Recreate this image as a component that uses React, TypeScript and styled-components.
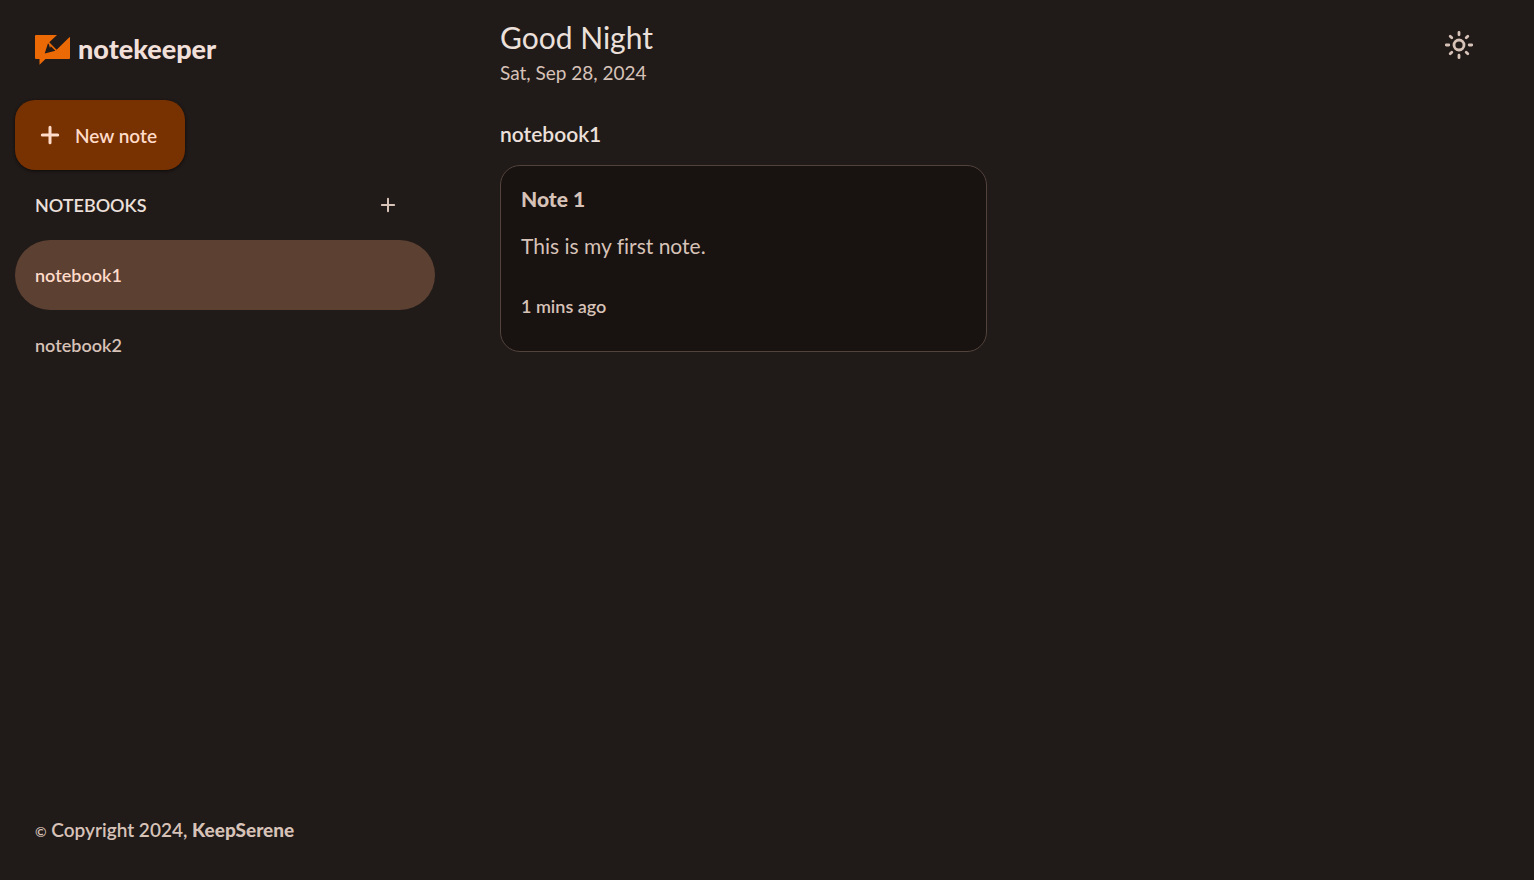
import React from "react";
import styled, { createGlobalStyle } from "styled-components";

const GlobalStyle = createGlobalStyle`
  *, *::before, *::after { box-sizing: border-box; }
  body {
    margin: 0;
    background: #201a18;
    color: #ece0db;
    font-family: Lato, "Open Sans", sans-serif;
    font-size: 18px;
    font-weight: 500;
    line-height: 25px;
    font-variant-ligatures: none;
  }
  h1, h2, h3, p, ul { margin: 0; padding: 0; }
  button { font: inherit; border: 0; cursor: pointer; }
`;

const Page = styled.div`
  display: grid;
  grid-template-columns: 450px minmax(0, 1fr);
  min-height: 100vh;
`;

const Sidebar = styled.aside`
  display: flex;
  flex-direction: column;
  padding: 20px 15px 36px;
`;

const Brand = styled.a`
  display: flex;
  align-items: center;
  gap: 8px;
  height: 60px;
  padding-left: 20px;
  color: #f1dfd9;
  font-size: 27px;
  font-weight: 900;
  text-decoration: none;
`;

const BrandName = styled.span`
  padding-bottom: 4px;
`;

const NewNoteButton = styled.button`
  display: flex;
  align-items: center;
  align-self: flex-start;
  gap: 10px;
  width: 170px;
  height: 70px;
  margin-top: 20px;
  padding: 0 20px;
  border-radius: 20px;
  background: #783100;
  color: #ffdbca;
  font-size: 19px;
  font-weight: 600;
  box-shadow: 0 1px 3px rgba(0, 0, 0, 0.4), 0 1px 3px rgba(0, 0, 0, 0.2);
`;

const SectionHeader = styled.div`
  display: flex;
  align-items: center;
  justify-content: space-between;
  height: 70px;
  padding: 0 32px 0 20px;
`;

const SectionTitle = styled.h2`
  font-size: 18px;
  font-weight: 600;
`;

const IconButton = styled.button<{ $size: number }>`
  display: grid;
  place-items: center;
  width: ${({ $size }) => $size}px;
  height: ${({ $size }) => $size}px;
  padding: 0;
  border-radius: 50%;
  background: transparent;
  color: #d7c2b8;
`;

const NotebookList = styled.ul`
  list-style: none;
`;

const NotebookButton = styled.button<{ $active?: boolean }>`
  width: 100%;
  height: 70px;
  padding: 0 20px;
  border-radius: 35px;
  background: ${({ $active }) => ($active ? "#5c4032" : "transparent")};
  color: ${({ $active }) => ($active ? "#ffdbca" : "#d7c2b8")};
  font-weight: 600;
  text-align: left;
`;

const Copyright = styled.p`
  margin-top: auto;
  padding-left: 20px;
  color: #d7c2b8;
  font-size: 19px;
  font-weight: 600;

  small { font-size: 14px; }
  strong { font-weight: 900; }
`;

const Main = styled.main`
  padding: 20px 50px;
`;

const TopBar = styled.header`
  display: flex;
  justify-content: space-between;
  align-items: flex-start;
`;

const Greeting = styled.h1`
  font-size: 30px;
  font-weight: 400;
  line-height: 35px;
`;

const Today = styled.p`
  margin-top: 5px;
  color: #d7c2b8;
  font-size: 19px;
  font-weight: 400;
`;

const NotebookTitle = styled.h2`
  margin: 34px 0 16px;
  font-size: 21px;
  font-weight: 600;
  line-height: 30px;
`;

const NoteGrid = styled.div`
  display: grid;
  grid-template-columns: repeat(2, minmax(0, 1fr));
  gap: 10px;
`;

const NoteCard = styled.article`
  padding: 20px 20px 32px;
  border: 1px solid #52443c;
  border-radius: 20px;
  background: #181210;
  color: #d7c2b8;
  font-weight: 600;
`;

const NoteTitle = styled.h3`
  font-size: 21px;
  font-weight: 900;
`;

const NoteText = styled.p`
  min-height: 50px;
  margin: 22px 0 11px;
  font-size: 21px;
  font-weight: 400;
`;

const Logo = () => (
  <svg width="35" height="30" viewBox="0 0 35 30" fill="#ec6a06" aria-hidden="true">
    <path fillRule="evenodd" d="M1 0H22L14.3 7.2L21.6 14.8L34.6 2Q35 2 35 2.5V23Q35 24 34 24H10.5L4.5 29.7V24H1Q0 24 0 23V1Q0 0 1 0ZM13 8.3L9.7 18.6L20.4 15.8L15.8 11.2L15 13L14 9.4Z" />
  </svg>
);

const Plus = ({ size, stroke }: { size: number; stroke: number }) => (
  <svg width={size} height={size} viewBox="0 0 30 30" fill="none" stroke="currentColor" strokeWidth={stroke} strokeLinecap="round" aria-hidden="true">
    <path d="M15 7.3V22.7M7.3 15H22.7" />
  </svg>
);

const Sun = () => (
  <svg width="30" height="30" viewBox="0 0 30 30" fill="none" stroke="currentColor" strokeWidth="2.8" strokeLinecap="round" aria-hidden="true">
    <circle cx="15" cy="15" r="5" />
    <path d="M15 2.3V4.8M15 25.2V27.7M2.3 15H4.8M25.2 15H27.7M6.2 6.2L7.8 7.8M22.2 22.2L23.8 23.8M6.2 23.8L7.8 22.2M22.2 7.8L23.8 6.2" />
  </svg>
);

export default function App() {
  return (
    <>
      <GlobalStyle />
      <Page>
        <Sidebar>
          <Brand href="#">
            <Logo />
            <BrandName>notekeeper</BrandName>
          </Brand>
          <NewNoteButton type="button">
            <Plus size={30} stroke={3} />
            <span>New note</span>
          </NewNoteButton>
          <SectionHeader>
            <SectionTitle>NOTEBOOKS</SectionTitle>
            <IconButton type="button" aria-label="Add notebook" $size={30}>
              <Plus size={24} stroke={2.5} />
            </IconButton>
          </SectionHeader>
          <NotebookList>
            <li><NotebookButton type="button" $active>notebook1</NotebookButton></li>
            <li><NotebookButton type="button">notebook2</NotebookButton></li>
          </NotebookList>
          <Copyright><small>©</small> Copyright 2024, <strong>KeepSerene</strong></Copyright>
        </Sidebar>
        <Main>
          <TopBar>
            <div>
              <Greeting>Good Night</Greeting>
              <Today>Sat, Sep 28, 2024</Today>
            </div>
            <IconButton type="button" aria-label="Toggle theme" $size={50}>
              <Sun />
            </IconButton>
          </TopBar>
          <NotebookTitle>notebook1</NotebookTitle>
          <NoteGrid>
            <NoteCard>
              <NoteTitle>Note 1</NoteTitle>
              <NoteText>This is my first note.</NoteText>
              <p>1 mins ago</p>
            </NoteCard>
          </NoteGrid>
        </Main>
      </Page>
    </>
  );
}
